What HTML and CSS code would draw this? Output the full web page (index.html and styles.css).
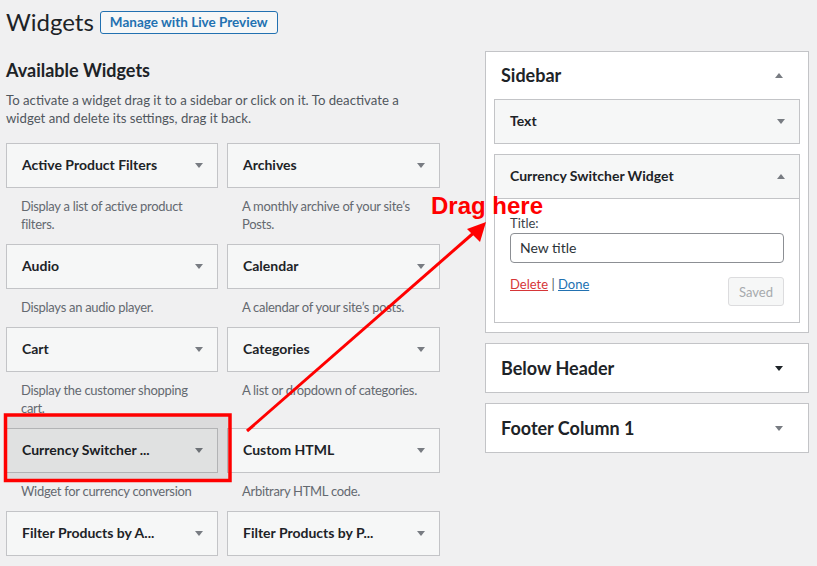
FILE: index.html
```html
<!DOCTYPE html>
<html lang="en">
<head>
<meta charset="utf-8">
<title>Widgets</title>
<link rel="stylesheet" href="styles.css">
</head>
<body>
<div class="wrap">
  <div class="page-head">
    <h1 class="page-title">Widgets</h1>
    <a class="page-action">Manage with Live Preview</a>
  </div>
  <div class="columns">
    <div class="available">
      <h2 class="section-title">Available Widgets</h2>
      <p class="intro">To activate a widget drag it to a sidebar or click on it. To deactivate a widget and delete its settings, drag it back.</p>
      <div class="widget-grid">
        <div class="cell">
          <div class="widget"><span class="wtitle">Active Product Filters</span><span class="toggle"><i class="tri down"></i></span></div>
          <p class="desc">Display a list of active product filters.</p>
        </div>
        <div class="cell">
          <div class="widget"><span class="wtitle">Archives</span><span class="toggle"><i class="tri down"></i></span></div>
          <p class="desc">A monthly archive of your site’s Posts.</p>
        </div>
        <div class="cell">
          <div class="widget"><span class="wtitle">Audio</span><span class="toggle"><i class="tri down"></i></span></div>
          <p class="desc">Displays an audio player.</p>
        </div>
        <div class="cell">
          <div class="widget"><span class="wtitle">Calendar</span><span class="toggle"><i class="tri down"></i></span></div>
          <p class="desc">A calendar of your site’s posts.</p>
        </div>
        <div class="cell">
          <div class="widget"><span class="wtitle">Cart</span><span class="toggle"><i class="tri down"></i></span></div>
          <p class="desc">Display the customer shopping cart.</p>
        </div>
        <div class="cell">
          <div class="widget"><span class="wtitle">Categories</span><span class="toggle"><i class="tri down"></i></span></div>
          <p class="desc">A list or dropdown of categories.</p>
        </div>
        <div class="cell">
          <div class="widget"><span class="wtitle">Currency Switcher ...</span><span class="toggle"><i class="tri down"></i></span></div>
          <p class="desc">Widget for currency conversion</p>
        </div>
        <div class="cell">
          <div class="widget"><span class="wtitle">Custom HTML</span><span class="toggle"><i class="tri down"></i></span></div>
          <p class="desc">Arbitrary HTML code.</p>
        </div>
        <div class="cell">
          <div class="widget"><span class="wtitle">Filter Products by A...</span><span class="toggle"><i class="tri down"></i></span></div>
        </div>
        <div class="cell">
          <div class="widget"><span class="wtitle">Filter Products by P...</span><span class="toggle"><i class="tri down"></i></span></div>
        </div>
      </div>
    </div>

    <div class="sidebars">
      <div class="panel">
        <div class="panel-head"><h2 class="panel-title">Sidebar</h2><span class="ptoggle"><i class="tri up"></i></span></div>
        <div class="panel-body">
          <div class="widget inner"><span class="wtitle">Text</span><span class="toggle"><i class="tri down"></i></span></div>
          <div class="widget-open">
            <div class="widget inner head"><span class="wtitle">Currency Switcher Widget</span><span class="toggle"><i class="tri up"></i></span></div>
            <div class="widget-inside">
              <label class="field-label">Title:</label>
              <div class="field">New title</div>
              <div class="actions">
                <div class="links"><a class="del">Delete</a> <span class="sep">|</span> <a class="done">Done</a></div>
                <span class="btn-saved">Saved</span>
              </div>
            </div>
          </div>
        </div>
      </div>
      <div class="panel closed">
        <div class="panel-head"><h2 class="panel-title">Below Header</h2><span class="ptoggle"><i class="tri down dark"></i></span></div>
      </div>
      <div class="panel closed">
        <div class="panel-head"><h2 class="panel-title">Footer Column 1</h2><span class="ptoggle"><i class="tri down"></i></span></div>
      </div>
    </div>
  </div>
</div>

<svg class="annot" width="817" height="566" viewBox="0 0 817 566" aria-hidden="true">
  <rect x="5.5" y="415" width="224.5" height="65.5" fill="rgba(0,0,0,0.085)" stroke="#ff0000" stroke-width="3.5"/>
  <line x1="247" y1="431" x2="477" y2="230" stroke="#ff0000" stroke-width="3"/>
  <polygon points="486,222 467,229 480,242" fill="#ff0000"/>
</svg>
<div class="drag-label">Drag here</div>
</body>
</html>
```

FILE: styles.css
```css
html, body {
  margin: 0;
  padding: 0;
  overflow: hidden;
}
body {
  background: #f0f0f1;
  color: #3c434a;
  font-family: "Lato", "Noto Sans", sans-serif;
  font-size: 13px;
  line-height: 18px;
  position: relative;
  width: 817px;
  height: 566px;
}
.wrap {
  padding-left: 6px;
}
.page-head {
  display: flex;
  align-items: center;
  height: 44px;
  gap: 6px;
}
.page-title {
  margin: 0;
  font-size: 24px;
  font-weight: 400;
  line-height: 1;
  color: #1d2327;
}
.page-action {
  display: inline-flex;
  align-items: center;
  height: 21px;
  padding: 0 9px;
  border: 1px solid #2271b1;
  border-radius: 3px;
  background: #f6f7f7;
  color: #2271b1;
  font-weight: 700;
  font-size: 13.5px;
}
.columns {
  display: flex;
  gap: 45px;
  align-items: flex-start;
}
.available {
  width: 434px;
}
.section-title {
  margin: 14px 0 0;
  padding-bottom: 1px;
  font-size: 18px;
  line-height: 24px;
  font-weight: 700;
  color: #1d2327;
}
.intro {
  margin: 8px 0 16px;
  max-width: 410px;
  color: #50575e;
  font-size: 13.2px;
}
.widget-grid {
  display: grid;
  grid-template-columns: 212px 213px;
  column-gap: 9px;
  align-items: start;
}
.widget {
  display: flex;
  align-items: center;
  height: 43px;
  border: 1px solid #c3c4c7;
  background: #f6f7f7;
}
.wtitle {
  flex: 1;
  padding-left: 15px;
  padding-bottom: 1px;
  font-weight: 700;
  font-size: 14px;
  color: #1d2327;
  white-space: nowrap;
  overflow: hidden;
}
.toggle {
  width: 36px;
  display: flex;
  justify-content: center;
  align-items: center;
}
.tri {
  display: block;
  width: 0;
  height: 0;
  border-left: 4px solid transparent;
  border-right: 4px solid transparent;
}
.tri.down {
  border-top: 5px solid #787c82;
}
.tri.up {
  border-bottom: 5px solid #787c82;
}
.tri.down.dark {
  border-top-color: #1d2327;
}
.desc {
  margin: 0;
  padding: 9px 8px 11px 15px;
  color: #646970;
  letter-spacing: -0.3px;
}
.sidebars {
  width: 324px;
  margin-top: 7px;
  display: flex;
  flex-direction: column;
  gap: 10px;
}
.panel {
  border: 1px solid #c3c4c7;
  background: #fff;
}
.panel-head {
  display: flex;
  align-items: center;
  height: 47px;
  padding-left: 15px;
}
.panel.closed .panel-head {
  height: 48px;
}
.panel-title {
  flex: 1;
  margin: 0;
  padding-bottom: 1px;
  font-size: 18px;
  font-weight: 700;
  color: #1d2327;
}
.ptoggle {
  width: 8px;
  margin-right: 25px;
  display: flex;
  justify-content: center;
}
.panel-body {
  padding: 0 8px 9px;
  display: flex;
  flex-direction: column;
  gap: 10px;
}
.widget-open {
  border: 1px solid #c3c4c7;
  background: #fff;
}
.widget-open .widget.head {
  border: 0;
  border-bottom: 1px solid #c3c4c7;
}
.widget-inside {
  padding: 15px 15px 16px;
}
.field-label {
  display: block;
  color: #3c434a;
}
.field {
  margin-top: 1px;
  height: 28px;
  border: 1px solid #8c8f94;
  border-radius: 4px;
  padding: 0 9px;
  display: flex;
  align-items: center;
  font-size: 14px;
  color: #2c3338;
}
.actions {
  margin-top: 12px;
  display: flex;
  justify-content: space-between;
  align-items: flex-start;
}
.links {
  color: #50575e;
}
.del {
  color: #d63638;
  text-decoration: underline;
}
.done {
  color: #2271b1;
  text-decoration: underline;
}
.btn-saved {
  margin-top: 2px;
  height: 27px;
  display: inline-flex;
  align-items: center;
  padding: 0 10px;
  border: 1px solid #dcdcde;
  border-radius: 3px;
  background: #f6f7f7;
  color: #a7aaad;
}
.annot {
  position: absolute;
  left: 0;
  top: 0;
  pointer-events: none;
}
.drag-label {
  position: absolute;
  left: 431px;
  top: 194px;
  font-family: "Liberation Sans", Arial, sans-serif;
  font-weight: 700;
  font-size: 24px;
  line-height: 24px;
  color: #ff0000;
  white-space: nowrap;
}
```
